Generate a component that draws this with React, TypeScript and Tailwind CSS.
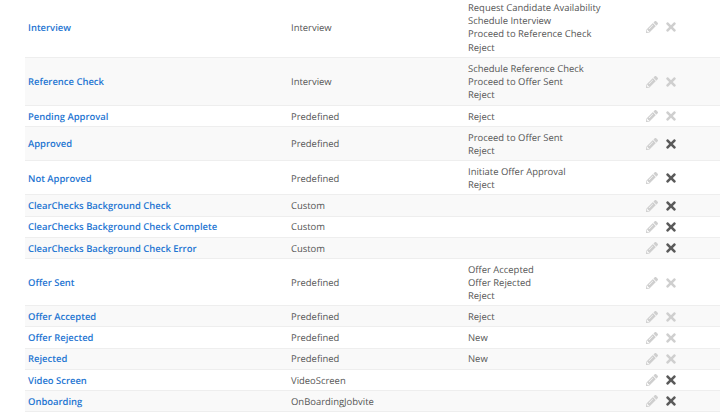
import React from 'react';
import { FaPencilAlt, FaTimes } from 'react-icons/fa';

interface Stage {
  name: string;
  type: string;
  actions: string[];
  canDelete: boolean;
}

const stages: Stage[] = [
  { name: 'Interview', type: 'Interview', actions: ['Request Candidate Availability', 'Schedule Interview', 'Proceed to Reference Check', 'Reject'], canDelete: false },
  { name: 'Reference Check', type: 'Interview', actions: ['Schedule Reference Check', 'Proceed to Offer Sent', 'Reject'], canDelete: false },
  { name: 'Pending Approval', type: 'Predefined', actions: ['Reject'], canDelete: false },
  { name: 'Approved', type: 'Predefined', actions: ['Proceed to Offer Sent', 'Reject'], canDelete: true },
  { name: 'Not Approved', type: 'Predefined', actions: ['Initiate Offer Approval', 'Reject'], canDelete: true },
  { name: 'ClearChecks Background Check', type: 'Custom', actions: [], canDelete: true },
  { name: 'ClearChecks Background Check Complete', type: 'Custom', actions: [], canDelete: true },
  { name: 'ClearChecks Background Check Error', type: 'Custom', actions: [], canDelete: true },
  { name: 'Offer Sent', type: 'Predefined', actions: ['Offer Accepted', 'Offer Rejected', 'Reject'], canDelete: false },
  { name: 'Offer Accepted', type: 'Predefined', actions: ['Reject'], canDelete: false },
  { name: 'Offer Rejected', type: 'Predefined', actions: ['New'], canDelete: false },
  { name: 'Rejected', type: 'Predefined', actions: ['New'], canDelete: false },
  { name: 'Video Screen', type: 'VideoScreen', actions: [], canDelete: true },
  { name: 'Onboarding', type: 'OnBoardingJobvite', actions: [], canDelete: true },
];

export default function App() {
  return (
    <div className="h-[420px] w-[720px] overflow-hidden bg-white pl-[25px] font-['Open_Sans',sans-serif] text-[9.45px] leading-[13.3px] text-[#555] [text-rendering:geometricPrecision]">
      <div className="mt-[-3px]">
        {stages.map((stage, i) => (
          <div
            key={stage.name}
            className={`grid grid-cols-[266px_177px_178px_1fr] items-center border-b border-[#eeeeee] pt-[3.9px] pb-[2.9px] ${i % 2 === 1 ? 'bg-[#f9f9f9]' : 'bg-white'}`}
          >
            <a className="pl-[3px] font-semibold text-[#1f76d2]">{stage.name}</a>
            <div>{stage.type}</div>
            <div className="min-h-[13.3px]">
              {stage.actions.map((a) => (
                <div key={a}>{a}</div>
              ))}
            </div>
            <div className="flex h-[13px] items-center gap-[8px]">
              <FaPencilAlt className="h-3 w-3 text-[#cfcfcf]" />
              <FaTimes className={`h-[14px] w-[10px] ${stage.canDelete ? 'text-[#5a5a5a]' : 'text-[#cfcfcf]'}`} />
            </div>
          </div>
        ))}
      </div>
    </div>
  );
}
